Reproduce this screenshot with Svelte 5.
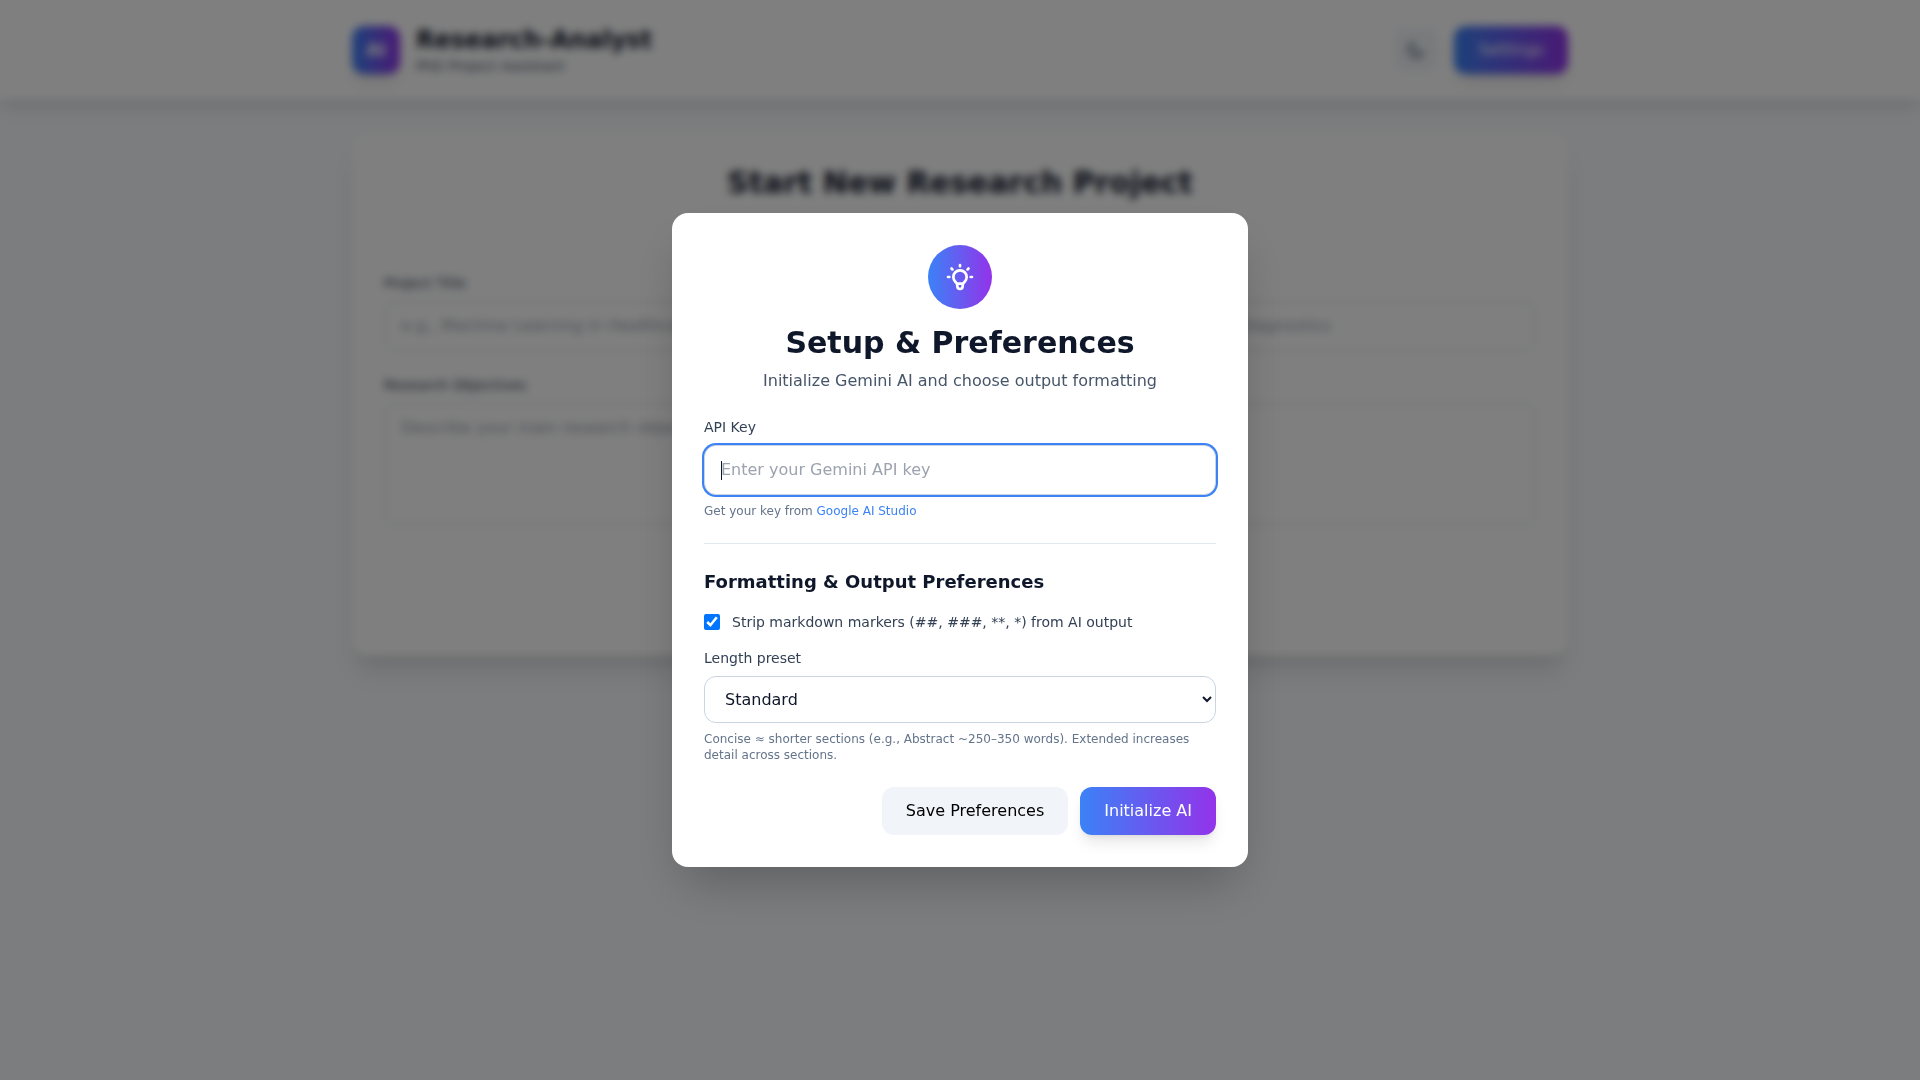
<script lang="ts">
    import { onMount } from 'svelte';

    let apiKey = '';
    let stripMarkdown = true;
    let lengthPreset = 'standard';
    let title = '';
    let objectives = '';

    let apiKeyEl: HTMLInputElement;

    onMount(() => {
        apiKeyEl.focus();
    });
</script>

<div class="app">
    <header class="header">
        <div class="container header-row">
            <div class="brand">
                <div class="logo">AI</div>
                <div>
                    <h1>Research-Analyst</h1>
                    <p class="tagline">PhD Project Assistant</p>
                </div>
            </div>
            <div class="header-actions">
                <button class="theme-toggle" aria-label="Toggle theme">
                    <svg width="20" height="20" viewBox="0 0 24 24" fill="none" stroke="currentColor" stroke-width="2" stroke-linecap="round" stroke-linejoin="round">
                        <path d="M20.354 15.354A9 9 0 018.646 3.646 9.003 9.003 0 0012 21a9.003 9.003 0 008.354-5.646z" />
                    </svg>
                </button>
                <button class="btn primary">Settings</button>
            </div>
        </div>
    </header>

    <main class="container main">
        <section class="card">
            <h2 class="card-title">Start New Research Project</h2>
            <form class="project-form">
                <div>
                    <label for="title">Project Title</label>
                    <input
                        id="title"
                        class="field"
                        type="text"
                        placeholder="e.g., Machine Learning in Healthcare: Smart Deep Learning Approaches for Early Disease Detection and Diagnostics"
                        bind:value={title}
                    />
                </div>
                <div>
                    <label for="objectives">Research Objectives</label>
                    <textarea
                        id="objectives"
                        class="field"
                        rows="4"
                        placeholder="Describe your main research objectives..."
                        bind:value={objectives}
                    ></textarea>
                </div>
            </form>
        </section>
    </main>
</div>

<div class="overlay">
    <div class="modal" role="dialog" aria-modal="true" aria-labelledby="modal-title">
        <div class="modal-head">
            <div class="modal-icon">
                <svg width="32" height="32" viewBox="0 0 24 24" fill="none" stroke="currentColor" stroke-width="2" stroke-linecap="round" stroke-linejoin="round">
                    <path d="M9.663 17h4.673M12 3v1m6.364 1.636l-.707.707M21 12h-1M4 12H3m3.343-5.657l-.707-.707m2.828 9.9a5 5 0 117.072 0l-.548.547A3.374 3.374 0 0014 18.469V19a2 2 0 11-4 0v-.531c0-.895-.356-1.754-.988-2.386l-.548-.547z" />
                </svg>
            </div>
            <h2 id="modal-title">Setup &amp; Preferences</h2>
            <p>Initialize Gemini AI and choose output formatting</p>
        </div>

        <div>
            <label for="api-key">API Key</label>
            <input
                id="api-key"
                class="field"
                type="password"
                placeholder="Enter your Gemini API key"
                bind:this={apiKeyEl}
                bind:value={apiKey}
            />
            <p class="hint">Get your key from <a href="https://aistudio.google.com/app/apikey">Google AI Studio</a></p>
        </div>

        <hr />

        <h3>Formatting &amp; Output Preferences</h3>
        <label class="check">
            <input type="checkbox" bind:checked={stripMarkdown} />
            <span>Strip markdown markers (##, ###, **, *) from AI output</span>
        </label>

        <div>
            <label for="length">Length preset</label>
            <select id="length" class="field" bind:value={lengthPreset}>
                <option value="concise">Concise</option>
                <option value="standard">Standard</option>
                <option value="extended">Extended</option>
            </select>
            <p class="hint">Concise ≈ shorter sections (e.g., Abstract ~250–350 words). Extended increases detail across sections.</p>
        </div>

        <div class="modal-actions">
            <button class="btn secondary">Save Preferences</button>
            <button class="btn primary">Initialize AI</button>
        </div>
    </div>
</div>

<style>
    :global(body) {
        margin: 0;
        background: #f8fafc;
    }

    .app,
    .overlay {
        font-family: "DejaVu Sans", sans-serif;
        font-size: 16px;
        line-height: 24px;
        color: #0f172a;
    }

    .app *,
    .overlay * {
        box-sizing: border-box;
    }

    h1, h2, h3, p {
        margin: 0;
    }

    button, input, select, textarea {
        font: inherit;
        color: inherit;
    }

    .app {
        min-height: 100vh;
    }

    .container {
        max-width: 1280px;
        margin: 0 auto;
        padding: 0 32px;
    }

    .header {
        border-bottom: 1px solid #e2e8f0;
        background: #fff;
        box-shadow: 0 10px 15px -3px rgba(0, 0, 0, 0.1), 0 4px 6px -4px rgba(0, 0, 0, 0.1);
    }

    .header-row {
        display: flex;
        align-items: center;
        justify-content: space-between;
        padding-top: 24px;
        padding-bottom: 24px;
    }

    .brand,
    .header-actions {
        display: flex;
        align-items: center;
        gap: 16px;
    }

    .logo {
        display: flex;
        align-items: center;
        justify-content: center;
        width: 48px;
        height: 48px;
        border-radius: 12px;
        background: linear-gradient(to right, #3b82f6, #9333ea);
        color: #fff;
        font-size: 18px;
        font-weight: 700;
        box-shadow: 0 10px 15px -3px rgba(0, 0, 0, 0.1), 0 4px 6px -4px rgba(0, 0, 0, 0.1);
    }

    h1 {
        font-size: 24px;
        line-height: 32px;
    }

    .tagline {
        font-size: 14px;
        line-height: 20px;
        color: #475569;
    }

    .theme-toggle {
        display: flex;
        padding: 12px;
        border: 0;
        border-radius: 12px;
        background: #f1f5f9;
        color: #475569;
    }

    .btn {
        padding: 12px 24px;
        border: 0;
        border-radius: 12px;
        cursor: pointer;
    }

    .btn.primary {
        background: linear-gradient(to right, #3b82f6, #9333ea);
        color: #fff;
        box-shadow: 0 10px 15px -3px rgba(0, 0, 0, 0.1), 0 4px 6px -4px rgba(0, 0, 0, 0.1);
    }

    .btn.secondary {
        background: #f1f5f9;
        color: #000;
    }

    .main {
        padding-top: 32px;
        padding-bottom: 32px;
    }

    .card {
        padding: 32px 32px 131px;
        border-radius: 16px;
        background: #fff;
        box-shadow: 0 20px 25px -5px rgba(0, 0, 0, 0.1), 0 8px 10px -6px rgba(0, 0, 0, 0.1);
    }

    .card-title {
        margin-bottom: 72px;
        font-size: 30px;
        line-height: 36px;
        text-align: center;
    }

    .project-form {
        display: flex;
        flex-direction: column;
        gap: 24px;
    }

    label {
        display: block;
        margin-bottom: 8px;
        font-size: 14px;
        line-height: 20px;
        color: #334155;
    }

    .field {
        display: block;
        width: 100%;
        padding: 12px 16px;
        border: 1px solid #cbd5e1;
        border-radius: 12px;
        background: #fff;
        resize: none;
    }

    .field::placeholder {
        color: #9ca3af;
    }

    .field:focus {
        outline: none;
        box-shadow: 0 0 0 2px #3b82f6;
    }

    /* steady caret in front of the placeholder */
    input.field:focus:placeholder-shown {
        caret-color: transparent;
        background: linear-gradient(#0f172a, #0f172a) 16px center / 1px 19px no-repeat #fff;
    }

    select.field {
        height: 47px;
    }

    .overlay {
        position: fixed;
        inset: 0;
        display: flex;
        align-items: center;
        justify-content: center;
        background: rgba(0, 0, 0, 0.5);
        backdrop-filter: blur(4px);
    }

    .modal {
        width: 100%;
        max-width: 576px;
        padding: 32px;
        border-radius: 16px;
        background: #fff;
        box-shadow: 0 25px 50px -12px rgba(0, 0, 0, 0.25);
    }

    .modal-head {
        margin-bottom: 24px;
        text-align: center;
        color: #475569;
    }

    .modal-icon {
        display: flex;
        align-items: center;
        justify-content: center;
        width: 64px;
        height: 64px;
        margin: 0 auto 16px;
        border-radius: 50%;
        background: linear-gradient(to right, #3b82f6, #9333ea);
        color: #fff;
    }

    .modal-head h2 {
        margin-bottom: 8px;
        font-size: 30px;
        line-height: 36px;
        color: #0f172a;
    }

    .hint {
        margin-top: 8px;
        font-size: 12px;
        line-height: 16px;
        color: #64748b;
    }

    .hint a {
        color: #3b82f6;
        text-decoration: none;
    }

    hr {
        margin: 24px 0;
        border: 0;
        border-top: 1px solid #e2e8f0;
    }

    h3 {
        margin-bottom: 16px;
        font-size: 18px;
        line-height: 28px;
    }

    .check {
        display: flex;
        align-items: center;
        gap: 12px;
        margin-bottom: 16px;
    }

    .check input {
        width: 16px;
        height: 16px;
        margin: 0;
    }

    .modal-actions {
        display: flex;
        justify-content: flex-end;
        gap: 12px;
        margin-top: 24px;
    }
</style>
